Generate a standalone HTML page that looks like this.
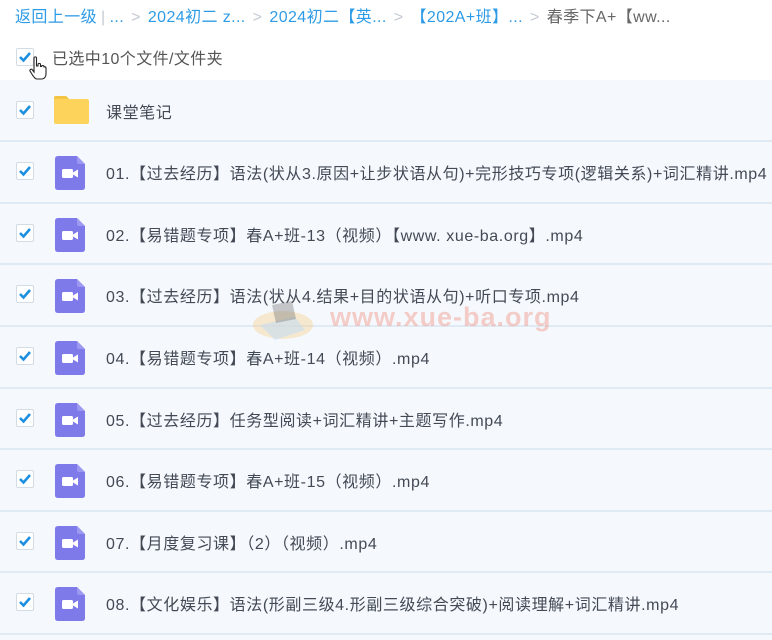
<!DOCTYPE html>
<html><head><meta charset="utf-8"><style>
*{margin:0;padding:0;box-sizing:border-box}
html,body{width:772px;height:640px;overflow:hidden}
body{background:#fff;font-family:"Liberation Sans","Noto Sans CJK SC",sans-serif;position:relative;color:#454d5a}
.bc{position:absolute;top:3px;left:15px;font-size:16px;white-space:nowrap;color:#2e9be6;letter-spacing:0.4px}
.bc .s{color:#c4cbd4;margin:0 7px}
.bc .g{color:#666}
.hdr{position:absolute;top:45px;left:52px;font-size:16px;color:#555;letter-spacing:0.4px}
.cb{position:absolute;width:18px;height:18px;border:1px solid #d3dbe4;border-radius:2px;background:#fff}
.cb svg{position:absolute;left:0px;top:0px}
.bg{position:absolute;left:0;top:80px;width:772px;height:560px;background:#f5f9fd}
.ln{position:absolute;left:0;width:772px;height:2px;background:#e0eaf4}
.row{position:absolute;left:0;width:772px;height:62px}
.row .t{position:absolute;left:106px;top:19px;font-size:16px;white-space:nowrap;color:#444a55;letter-spacing:0.6px}
.row .cb{left:16px;top:21px}
.vi{position:absolute;left:55px;top:15px}
.wm{position:absolute;left:330px;top:302px;font-size:27px;font-weight:bold;color:rgba(240,120,100,0.35);letter-spacing:1px}
</style></head><body>
<div class="bc">返回上一级<span class="s" style="margin:0 4px">|</span><span>...</span><span class="s">&gt;</span>2024初二 z...<span class="s">&gt;</span>2024初二【英...<span class="s">&gt;</span>【202A+班】...<span class="s">&gt;</span><span class="g">春季下A+【ww...</span></div>
<div class="cb" style="left:16px;top:48px"><svg width="16" height="16"><path d="M3 8 L6.5 11.5 L13 4" stroke="#1d8fe0" stroke-width="2.6" fill="none"/></svg></div>
<div class="hdr">已选中10个文件/文件夹</div>

<div class="bg"></div>
<div class="ln" style="top:140px"></div>
<div class="ln" style="top:202px"></div>
<div class="ln" style="top:263px"></div>
<div class="ln" style="top:325px"></div>
<div class="ln" style="top:387px"></div>
<div class="ln" style="top:448px"></div>
<div class="ln" style="top:510px"></div>
<div class="ln" style="top:571px"></div>
<div class="ln" style="top:633px"></div>

<div class="row" style="top:80px;height:61px">
<div class="cb"><svg width="16" height="16"><path d="M3 8 L6.5 11.5 L13 4" stroke="#1d8fe0" stroke-width="2.6" fill="none"/></svg></div>
<svg class="vi" style="left:53px;top:15px" width="37" height="30"><path d="M1 3 Q1 1 3 1 L13 1 L16 4 L34 4 Q36 4 36 6 L36 27 Q36 29 34 29 L3 29 Q1 29 1 27 Z" fill="#fdd35b"/><path d="M1 3 Q1 1 3 1 L13 1 L16 4 L1 4Z" fill="#f4c443"/></svg>
<div class="t">课堂笔记</div></div>

<div class="row" style="top:141px"><div class="cb"><svg width="16" height="16"><path d="M3 8 L6.5 11.5 L13 4" stroke="#1d8fe0" stroke-width="2.6" fill="none"/></svg></div><svg class="vi" width="30" height="34" viewBox="0 0 30 34"><path d="M3 0 L22 0 L30 8 L30 31 Q30 34 27 34 L3 34 Q0 34 0 31 L0 3 Q0 0 3 0Z" fill="#7f7aea"/><path d="M22 0 L30 8 L24 8 Q22 8 22 6Z" fill="#9d99f2"/><rect x="7" y="13" width="11" height="9" rx="1.5" fill="#fff"/><path d="M18 16.5 L23 13.5 L23 21.5 L18 18.5Z" fill="#fff"/></svg><div class="t">01.【过去经历】语法(状从3.原因+让步状语从句)+完形技巧专项(逻辑关系)+词汇精讲.mp4</div></div>

<div class="row" style="top:203px"><div class="cb"><svg width="16" height="16"><path d="M3 8 L6.5 11.5 L13 4" stroke="#1d8fe0" stroke-width="2.6" fill="none"/></svg></div><svg class="vi" width="30" height="34" viewBox="0 0 30 34"><path d="M3 0 L22 0 L30 8 L30 31 Q30 34 27 34 L3 34 Q0 34 0 31 L0 3 Q0 0 3 0Z" fill="#7f7aea"/><path d="M22 0 L30 8 L24 8 Q22 8 22 6Z" fill="#9d99f2"/><rect x="7" y="13" width="11" height="9" rx="1.5" fill="#fff"/><path d="M18 16.5 L23 13.5 L23 21.5 L18 18.5Z" fill="#fff"/></svg><div class="t">02.【易错题专项】春A+班-13（视频）【www. xue-ba.org】.mp4</div></div>

<div class="row" style="top:264px"><div class="cb"><svg width="16" height="16"><path d="M3 8 L6.5 11.5 L13 4" stroke="#1d8fe0" stroke-width="2.6" fill="none"/></svg></div><svg class="vi" width="30" height="34" viewBox="0 0 30 34"><path d="M3 0 L22 0 L30 8 L30 31 Q30 34 27 34 L3 34 Q0 34 0 31 L0 3 Q0 0 3 0Z" fill="#7f7aea"/><path d="M22 0 L30 8 L24 8 Q22 8 22 6Z" fill="#9d99f2"/><rect x="7" y="13" width="11" height="9" rx="1.5" fill="#fff"/><path d="M18 16.5 L23 13.5 L23 21.5 L18 18.5Z" fill="#fff"/></svg><div class="t">03.【过去经历】语法(状从4.结果+目的状语从句)+听口专项.mp4</div></div>

<div class="row" style="top:326px"><div class="cb"><svg width="16" height="16"><path d="M3 8 L6.5 11.5 L13 4" stroke="#1d8fe0" stroke-width="2.6" fill="none"/></svg></div><svg class="vi" width="30" height="34" viewBox="0 0 30 34"><path d="M3 0 L22 0 L30 8 L30 31 Q30 34 27 34 L3 34 Q0 34 0 31 L0 3 Q0 0 3 0Z" fill="#7f7aea"/><path d="M22 0 L30 8 L24 8 Q22 8 22 6Z" fill="#9d99f2"/><rect x="7" y="13" width="11" height="9" rx="1.5" fill="#fff"/><path d="M18 16.5 L23 13.5 L23 21.5 L18 18.5Z" fill="#fff"/></svg><div class="t">04.【易错题专项】春A+班-14（视频）.mp4</div></div>

<div class="row" style="top:388px"><div class="cb"><svg width="16" height="16"><path d="M3 8 L6.5 11.5 L13 4" stroke="#1d8fe0" stroke-width="2.6" fill="none"/></svg></div><svg class="vi" width="30" height="34" viewBox="0 0 30 34"><path d="M3 0 L22 0 L30 8 L30 31 Q30 34 27 34 L3 34 Q0 34 0 31 L0 3 Q0 0 3 0Z" fill="#7f7aea"/><path d="M22 0 L30 8 L24 8 Q22 8 22 6Z" fill="#9d99f2"/><rect x="7" y="13" width="11" height="9" rx="1.5" fill="#fff"/><path d="M18 16.5 L23 13.5 L23 21.5 L18 18.5Z" fill="#fff"/></svg><div class="t">05.【过去经历】任务型阅读+词汇精讲+主题写作.mp4</div></div>

<div class="row" style="top:449px"><div class="cb"><svg width="16" height="16"><path d="M3 8 L6.5 11.5 L13 4" stroke="#1d8fe0" stroke-width="2.6" fill="none"/></svg></div><svg class="vi" width="30" height="34" viewBox="0 0 30 34"><path d="M3 0 L22 0 L30 8 L30 31 Q30 34 27 34 L3 34 Q0 34 0 31 L0 3 Q0 0 3 0Z" fill="#7f7aea"/><path d="M22 0 L30 8 L24 8 Q22 8 22 6Z" fill="#9d99f2"/><rect x="7" y="13" width="11" height="9" rx="1.5" fill="#fff"/><path d="M18 16.5 L23 13.5 L23 21.5 L18 18.5Z" fill="#fff"/></svg><div class="t">06.【易错题专项】春A+班-15（视频）.mp4</div></div>

<div class="row" style="top:511px"><div class="cb"><svg width="16" height="16"><path d="M3 8 L6.5 11.5 L13 4" stroke="#1d8fe0" stroke-width="2.6" fill="none"/></svg></div><svg class="vi" width="30" height="34" viewBox="0 0 30 34"><path d="M3 0 L22 0 L30 8 L30 31 Q30 34 27 34 L3 34 Q0 34 0 31 L0 3 Q0 0 3 0Z" fill="#7f7aea"/><path d="M22 0 L30 8 L24 8 Q22 8 22 6Z" fill="#9d99f2"/><rect x="7" y="13" width="11" height="9" rx="1.5" fill="#fff"/><path d="M18 16.5 L23 13.5 L23 21.5 L18 18.5Z" fill="#fff"/></svg><div class="t">07.【月度复习课】（2）（视频）.mp4</div></div>

<div class="row" style="top:572px"><div class="cb"><svg width="16" height="16"><path d="M3 8 L6.5 11.5 L13 4" stroke="#1d8fe0" stroke-width="2.6" fill="none"/></svg></div><svg class="vi" width="30" height="34" viewBox="0 0 30 34"><path d="M3 0 L22 0 L30 8 L30 31 Q30 34 27 34 L3 34 Q0 34 0 31 L0 3 Q0 0 3 0Z" fill="#7f7aea"/><path d="M22 0 L30 8 L24 8 Q22 8 22 6Z" fill="#9d99f2"/><rect x="7" y="13" width="11" height="9" rx="1.5" fill="#fff"/><path d="M18 16.5 L23 13.5 L23 21.5 L18 18.5Z" fill="#fff"/></svg><div class="t">08.【文化娱乐】语法(形副三级4.形副三级综合突破)+阅读理解+词汇精讲.mp4</div></div>

<svg style="position:absolute;left:29px;top:56px" width="18" height="26" viewBox="0 0 18 26"><path d="M5 2 C5 0.5 7.5 0.5 7.5 2 L7.5 10 L9 10 L9 8.5 C9 7 11.5 7 11.5 8.5 L11.5 10.5 L12.5 10.5 C12.5 9.2 15 9.2 15 10.5 L15 11.5 C15 10.5 17 10.5 17 12 L17 18 C17 21 15 23 13 23 L8 23 C6 23 5 21 3.5 19 L1 15 C0.5 13.5 2.5 12.5 3.5 14 L5 16 Z" fill="#fff" stroke="#222" stroke-width="1.1"/></svg>
<svg style="position:absolute;left:250px;top:295px" width="80" height="50"><ellipse cx="33" cy="30" rx="30" ry="14" fill="rgba(250,200,120,0.35)"/><path d="M10 30 L45 22 L55 35 L25 45Z" fill="rgba(200,220,240,0.6)"/><path d="M22 10 L42 6 L46 24 L26 28Z" fill="rgba(120,120,120,0.4)"/></svg>
<div class="wm">www.xue-ba.org</div>
</body></html>
